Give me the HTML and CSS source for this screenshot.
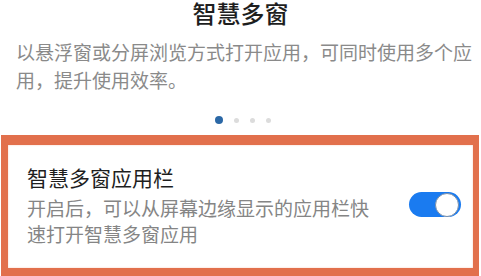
FILE: index.html
```html
<!DOCTYPE html>
<html lang="zh-CN">
<head>
  <meta charset="UTF-8" />
  <meta name="viewport" content="width=device-width, initial-scale=1.0"/>
  <title>智慧多窗</title>
  <link rel="stylesheet" href="styles.css">
</head>
<body>
  <div class="intro">
    <h1 class="intro-title">智慧多窗</h1>
    <p class="intro-text">以悬浮窗或分屏浏览方式打开应用，可同时使用多个应用，提升使用效率。</p>
    <div class="dots">
      <span class="dot active"></span>
      <span class="dot"></span>
      <span class="dot"></span>
      <span class="dot"></span>
    </div>
  </div>

  <div class="card">
    <div class="card-text">
      <div class="card-title">智慧多窗应用栏</div>
      <div class="card-desc">开启后，可以从屏幕边缘显示的应用栏快速打开智慧多窗应用</div>
    </div>
    <div class="switch on"><span class="knob"></span></div>
  </div>
</body>
</html>
```

FILE: styles.css
```css
body {
  margin: 0;
  background: #fff;
  font-family: "Noto Sans CJK SC", "Noto Sans", sans-serif;
  overflow: hidden;
}

.intro {
  text-align: center;
}

.intro-title {
  margin: 0;
  font-size: 24px;
  line-height: 26px;
  font-weight: 500;
  color: #1e1e1e;
}

.intro-text {
  margin: 12px 0 0 16px;
  width: 460px;
  text-align: left;
  font-size: 19px;
  line-height: 28px;
  color: #8a8a8a;
}

.dots {
  display: flex;
  justify-content: center;
  align-items: center;
  gap: 11px;
  margin-top: 22px;
  padding-left: 4px;
  height: 8px;
}

.dot {
  width: 5px;
  height: 5px;
  border-radius: 50%;
  background: #dcdcdc;
}

.dot.active {
  width: 8px;
  height: 8px;
  background: #2b68a6;
}

.card {
  display: flex;
  align-items: center;
  margin: 11px 0 0 1px;
  width: 478px;
  box-sizing: border-box;
  height: 141px;
  border-style: solid;
  border-color: #e2704c;
  border-width: 10px 6px 8px 7px;
  padding: 0 12px 4px 19px;
  background: #fff;
  box-shadow: inset 0 0 2px #f6c9b8;
}

.card-text {
  flex: 1;
}

.card-title {
  font-size: 21px;
  line-height: 28px;
  font-weight: 400;
  color: #1e1e1e;
}

.card-desc {
  margin-top: 4px;
  width: 350px;
  font-size: 19px;
  line-height: 26px;
  color: #858585;
}

.switch {
  position: relative;
  flex-shrink: 0;
  width: 52px;
  height: 25px;
  border-radius: 13px;
  background: #1a7bf0;
}

.knob {
  position: absolute;
  right: 2px;
  top: 0.5px;
  width: 22px;
  height: 22px;
  border-radius: 50%;
  background: #fff;
  border: 1px solid #7b8fa8;
}
```
